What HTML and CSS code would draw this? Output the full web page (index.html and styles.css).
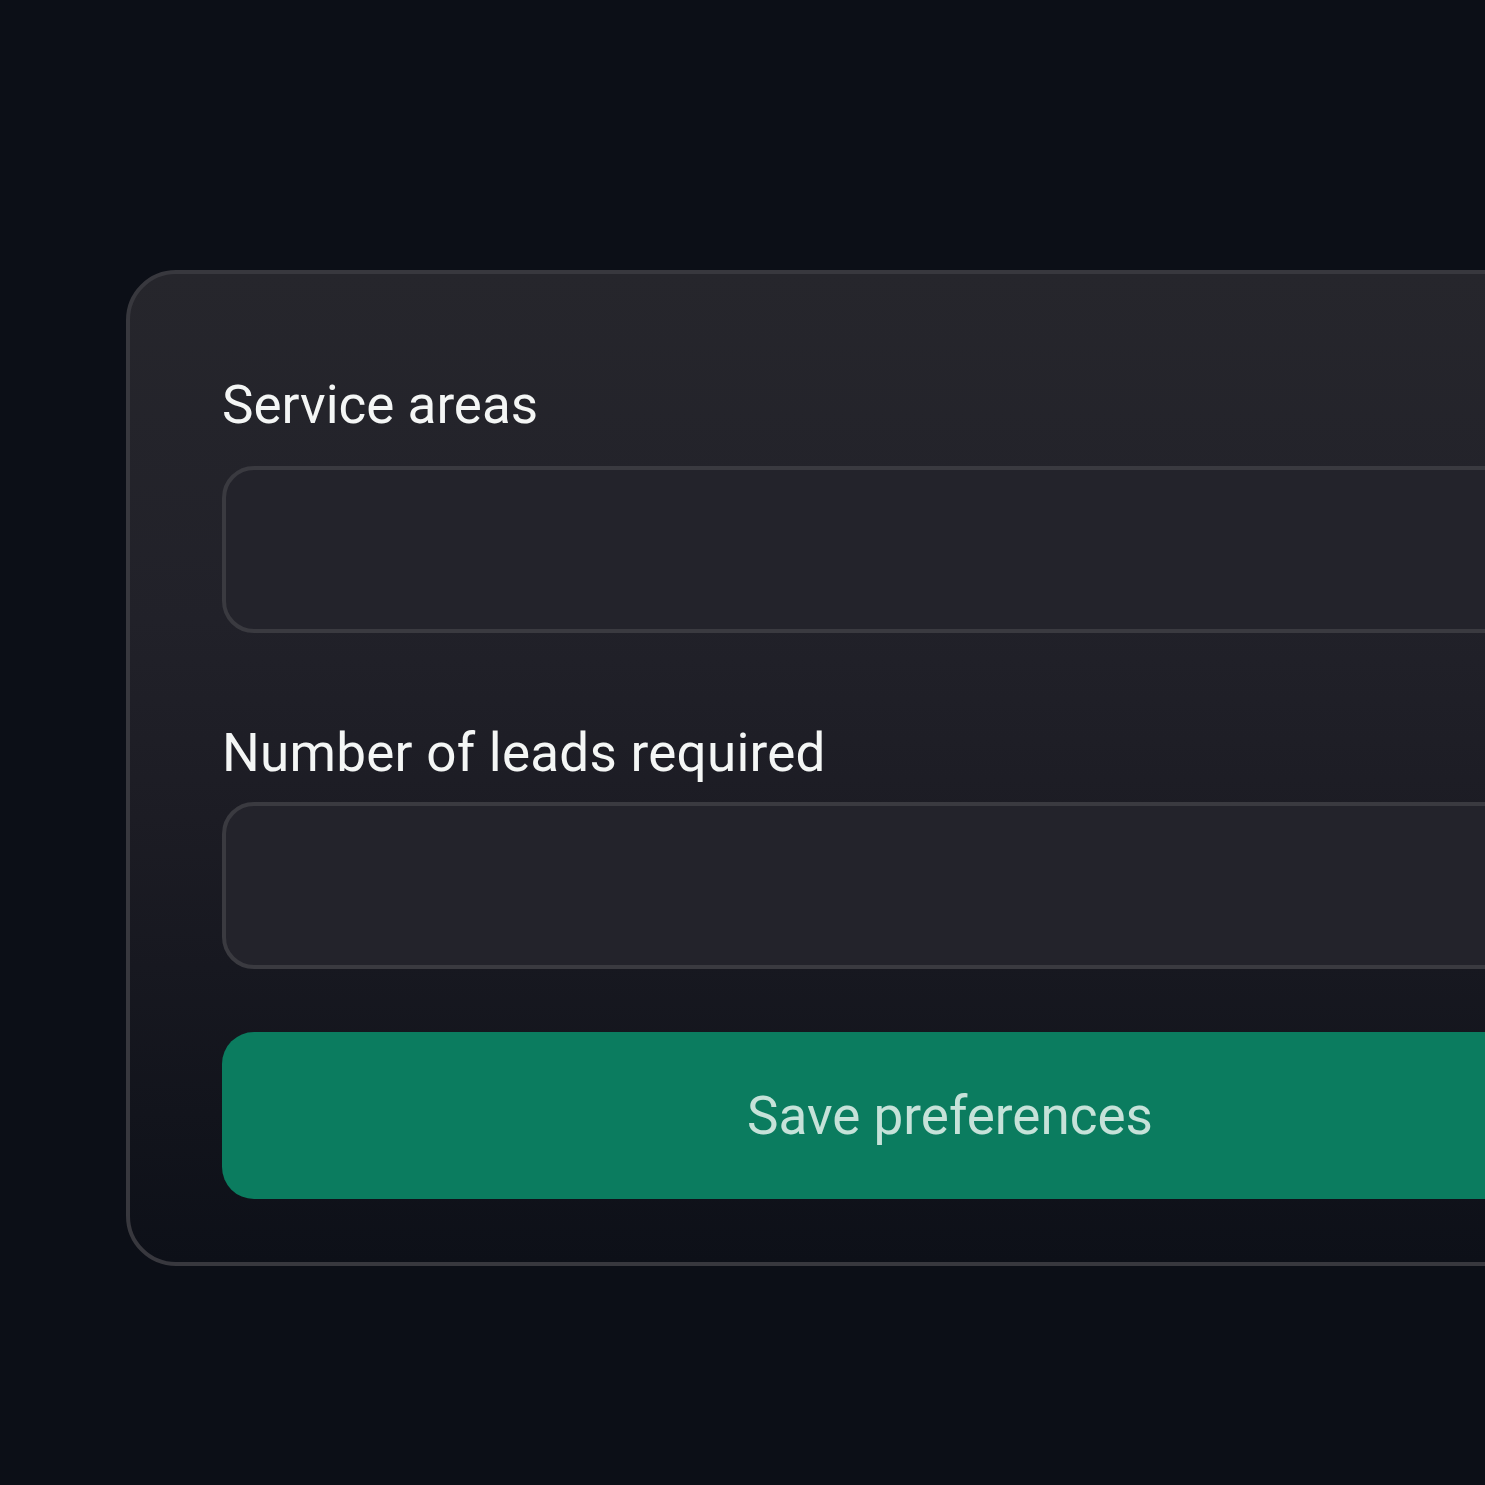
FILE: index.html
```html
<!DOCTYPE html>
<html lang="en">
<head>
<meta charset="utf-8">
<title>Preferences</title>
<link rel="stylesheet" href="styles.css">
</head>
<body>
<div class="card">
  <label class="label label-first" for="areas">Service areas</label>
  <input class="field field-first" id="areas" type="text">
  <label class="label label-second" for="leads">Number of leads required</label>
  <input class="field field-second" id="leads" type="text">
  <button class="save" type="button">Save preferences</button>
</div>
</body>
</html>
```

FILE: styles.css
```css
html, body {
  margin: 0;
  padding: 0;
  background: #0c0f17;
  overflow: hidden;
  width: 1485px;
  height: 1485px;
}

body {
  font-family: Roboto, "Noto Sans", sans-serif;
}

.card {
  box-sizing: border-box;
  margin: 270px 0 0 126px;
  width: 1648px;
  height: 996px;
  border: 4px solid #38383e;
  border-radius: 50px;
  padding: 99px 92px 0 92px;
  display: flex;
  flex-direction: column;
  align-items: stretch;
  background: linear-gradient(180deg, #26262c 0%, #212129 35%, #1c1c24 55%, #0d1018 100%);
}

.label {
  display: block;
  font-size: 53px;
  line-height: 64px;
  color: #f4f6f5;
  font-weight: 400;
}

.label-first {
  margin-bottom: 29px;
}

.label-second {
  margin-top: 88px;
  margin-bottom: 17px;
  letter-spacing: 0.25px;
}

.field {
  box-sizing: border-box;
  height: 167px;
  border: 4px solid #3a3a40;
  border-radius: 32px;
  background: #23232b;
  outline: none;
  margin: 0;
}

.save {
  box-sizing: border-box;
  margin-top: 63px;
  height: 167px;
  border: none;
  border-radius: 32px;
  background: #0b7c5f;
  color: #c6e2d9;
  font-family: Roboto, "Noto Sans", sans-serif;
  font-size: 53px;
  cursor: pointer;
}
```
